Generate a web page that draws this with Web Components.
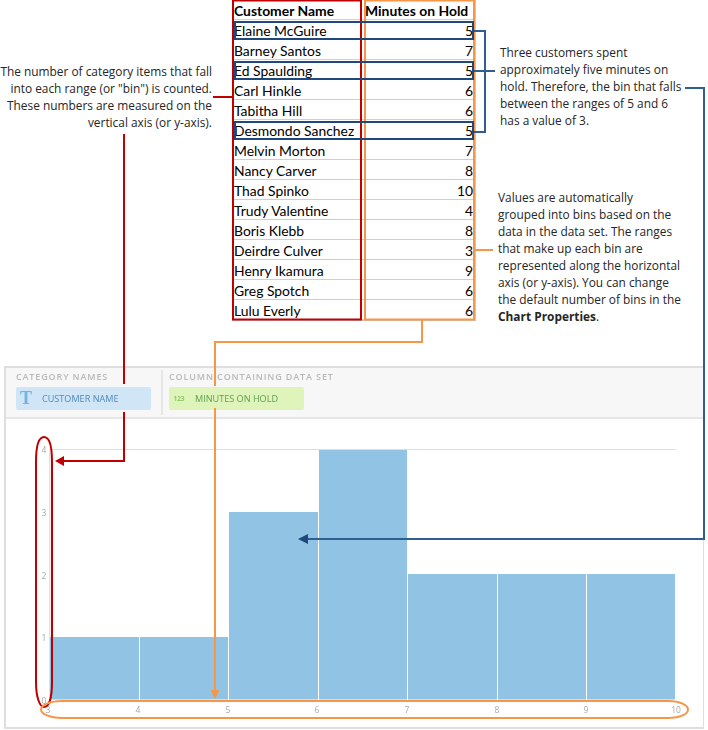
<!DOCTYPE html>
<html lang="en">
<head>
<meta charset="utf-8">
<title>Histogram chart anatomy</title>
<style>
html,body{margin:0;padding:0;background:#fff}
</style>
</head>
<body>
<help-page>
  <ref-note slot="left" align="right" style="padding-top:63px">The number of category items that fall<br>into each range (or "bin") is counted.<br>These numbers are measured on the<br>vertical axis (or y-axis).</ref-note>
  <data-table slot="table"></data-table>
  <ref-note slot="right" style="padding-top:44px;padding-left:2px">Three customers spent<br>approximately five minutes on<br>hold. Therefore, the bin that falls<br>between the ranges of 5 and 6<br>has a value of 3.</ref-note>
  <ref-note slot="right" style="padding-top:60px">Values are automatically<br>grouped into bins based on the<br>data in the data set. The ranges<br>that make up each bin are<br>represented along the horizontal<br>axis (or y-axis). You can change<br>the default number of bins in the<br><b>Chart Properties</b>.</ref-note>
  <chart-panel slot="chart">
    <field-group slot="fields" label="CATEGORY NAMES">
      <field-pill kind="text">CUSTOMER NAME</field-pill>
    </field-group>
    <field-group slot="fields" label="COLUMN CONTAINING DATA SET">
      <field-pill kind="num">MINUTES ON HOLD</field-pill>
    </field-group>
    <histogram-chart slot="plot"></histogram-chart>
  </chart-panel>
  <callout-layer slot="overlay"></callout-layer>
</help-page>
<script>
function shadow(el, html){ el.attachShadow({mode:'open'}).innerHTML = html; }

customElements.define('help-page', class extends HTMLElement{
  constructor(){ super(); shadow(this, `<style>
    :host{display:block;position:relative;width:708px;height:730px;overflow:hidden;background:#fff}
    .top{display:grid;grid-template-columns:213px 244px 1fr;column-gap:19px;height:366px}
    .right{display:flex;flex-direction:column;margin-left:3px}
    .bottom{padding-left:4px}
  </style>
  <div class="top">
    <div><slot name="left"></slot></div>
    <div><slot name="table"></slot></div>
    <div class="right"><slot name="right"></slot></div>
  </div>
  <div class="bottom"><slot name="chart"></slot></div>
  <slot name="overlay"></slot>`); }
});

customElements.define('ref-note', class extends HTMLElement{
  constructor(){ super(); shadow(this, `<style>
    :host{display:block;font:11.88px/17px "Open Sans",sans-serif;color:#262626;white-space:nowrap}
    :host([align=right]){text-align:right;margin-left:-4px;margin-right:1px}
  </style><slot></slot>`); }
});

customElements.define('data-table', class extends HTMLElement{
  constructor(){ super();
    const rows=[['Elaine McGuire',5],['Barney Santos',7],['Ed Spaulding',5],['Carl Hinkle',6],['Tabitha Hill',6],['Desmondo Sanchez',5],['Melvin Morton',7],['Nancy Carver',8],['Thad Spinko',10],['Trudy Valentine',4],['Boris Klebb',8],['Deirdre Culver',3],['Henry Ikamura',9],['Greg Spotch',6],['Lulu Everly',6]];
    shadow(this, `<style>
      :host{display:grid;grid-template-columns:130px 114px;width:244px;font:13.9px/20px Lato,"Open Sans",sans-serif;color:#000;border-bottom:1px solid #c8c8c8}
      .c{height:20px;box-sizing:border-box;border-bottom:1px solid #cfcfcf;padding:1px 3px 0 3px;white-space:nowrap;overflow:hidden}
      .n{border-right:1px solid #cfcfcf;border-left:1px solid #c8c8c8;padding-left:1px}
      .v{text-align:right;border-right:1px solid #c8c8c8;padding-right:2px}
      .h{font-weight:700}
      .v.h{text-align:left;padding-left:3px}
    </style><div class="c n h">Customer Name</div><div class="c v h">Minutes on Hold</div>`+
    rows.map(r=>`<div class="c n">${r[0]}</div><div class="c v">${r[1]}</div>`).join('')); }
});

customElements.define('chart-panel', class extends HTMLElement{
  constructor(){ super(); shadow(this, `<style>
    :host{display:block;width:700px;height:363px;box-sizing:border-box;border:solid #dedede;border-width:2px 1px 2px 2px;background:#fff;filter:blur(.3px)}
    .bar{display:flex;height:49px;background:#f7f7f7;border-bottom:2px solid #e6e6e6;padding-left:10px}
    ::slotted(histogram-chart){display:block}
  </style>
  <div class="bar"><slot name="fields"></slot></div>
  <slot name="plot"></slot>`); }
});

customElements.define('field-group', class extends HTMLElement{
  constructor(){ super(); shadow(this, `<style>
    :host{display:flex;flex-direction:column;width:135px;padding-right:10px;margin-right:6px;height:45px;margin-top:2px;border-right:2px solid #e6e6e6}
    :host(:last-of-type){border-right:0}
    .l{font:600 9px/14px "Open Sans",sans-serif;letter-spacing:.86px;color:#b9b9b9;white-space:nowrap;height:17px}
  </style><div class="l">${this.getAttribute('label')}</div><slot></slot>`); }
});

customElements.define('field-pill', class extends HTMLElement{
  constructor(){ super();
    const num=this.getAttribute('kind')==='num';
    shadow(this, `<style>
      :host{display:grid;grid-template-columns:26px 1fr;align-items:center;width:135px;height:23px;border-radius:2px;font:9.1px/23px "Open Sans",sans-serif;white-space:nowrap;
        background:${num?'#def4bb':'#d0e5f6'};color:${num?'#5f9e4f':'#5288b8'}}
      .i{display:block;text-align:center;padding-right:6px}
      .T{font:700 18px/23px "Liberation Serif",serif;color:#74b3e0}
      .N{font:700 6.5px/21px "Open Sans",sans-serif;color:#8fcb66}
    </style><span class="i ${num?'N':'T'}">${num?'123':'T'}</span><span><slot></slot></span>`); }
});

customElements.define('histogram-chart', class extends HTMLElement{
  constructor(){ super();
    const xs=[[50,139],[140,228],[229,318],[319,407],[408,497],[498,586],[587,675]];
    const tops=[637,637,512,450,574,574,574];
    const ylab=[[4,449.5],[3,512],[2,575],[1,637],[0,700]];
    const xlab=[[3,48],[4,138],[5,228],[6,317],[7,407],[8,497],[9,586],[10,676]];
    shadow(this, `<style>
      :host{display:block;height:310px}
      svg{display:block}
      text{font:8.5px "Open Sans",sans-serif;fill:#a8a8a8;text-anchor:middle;dominant-baseline:central}
    </style>
    <svg width="697" height="310" viewBox="6 419 697 310">
      <rect x="50" y="449" width="626" height="1" fill="#dedede"/>
      <rect x="49" y="450" width="1.5" height="250" fill="#e2e2e2"/>
      ${xs.map((x,i)=>`<rect x="${x[0]}" y="${tops[i]}" width="${x[1]-x[0]}" height="${699.5-tops[i]}" fill="#90c3e4"/>`).join('')}
      ${ylab.map(l=>`<text x="44" y="${l[1]}">${l[0]}</text>`).join('')}
      ${xlab.map(l=>`<text x="${l[1]}" y="709.5">${l[0]}</text>`).join('')}
    </svg>`); }
});

customElements.define('callout-layer', class extends HTMLElement{
  constructor(){ super(); shadow(this, `<style>
    :host{position:absolute;left:0;top:0;width:708px;height:730px;pointer-events:none}
    svg{display:block}
    path,rect{fill:none}
    .r{stroke:#c00000;stroke-width:2}
    .o{stroke:#f79646;stroke-width:2}
    .b{stroke:#1f497d;stroke-width:2}
    .bl{stroke:#2f5f90;stroke-width:2}
  </style>
  <svg width="708" height="730" viewBox="0 0 708 730">
    <rect class="r" x="233" y="0.5" width="128" height="319"/>
    <rect class="o" x="365" y="0.5" width="109" height="319"/>
    <rect class="b" x="235" y="22" width="238" height="17"/>
    <rect class="b" x="235" y="62" width="238" height="17"/>
    <rect class="b" x="235" y="122" width="238" height="17"/>
    <path class="bl" d="M474 31H485V132H474M474 71H495"/>
    <path class="bl" d="M685 88H704V539H306"/>
    <polygon points="298,539 308,534 308,544" fill="#1f497d"/>
    <path class="r" d="M213 97H232"/>
    <path class="r" d="M124 134V384M124 412V461H62"/>
    <polygon points="55,461 64,456 64,466" fill="#c00000"/>
    <path class="r" d="M44 437C38 437 36 447 36 462V682C36 698 40 707 44 707C49 707 52 698 52 682V462C52 447 50 437 44 437Z"/>
    <path class="o" d="M475 250H493"/>
    <path class="o" d="M422 320V342H215V386M215 408V691"/>
    <polygon points="215,699 210.500,690 219.500,690" fill="#f79646"/>
    <path class="o" d="M62 701H668C680 701 688 705 688 709.500S680 718 668 718H62C50 718 41 714 41 709.500S50 701 62 701Z"/>
  </svg>`); }
});
</script>
</body>
</html>
